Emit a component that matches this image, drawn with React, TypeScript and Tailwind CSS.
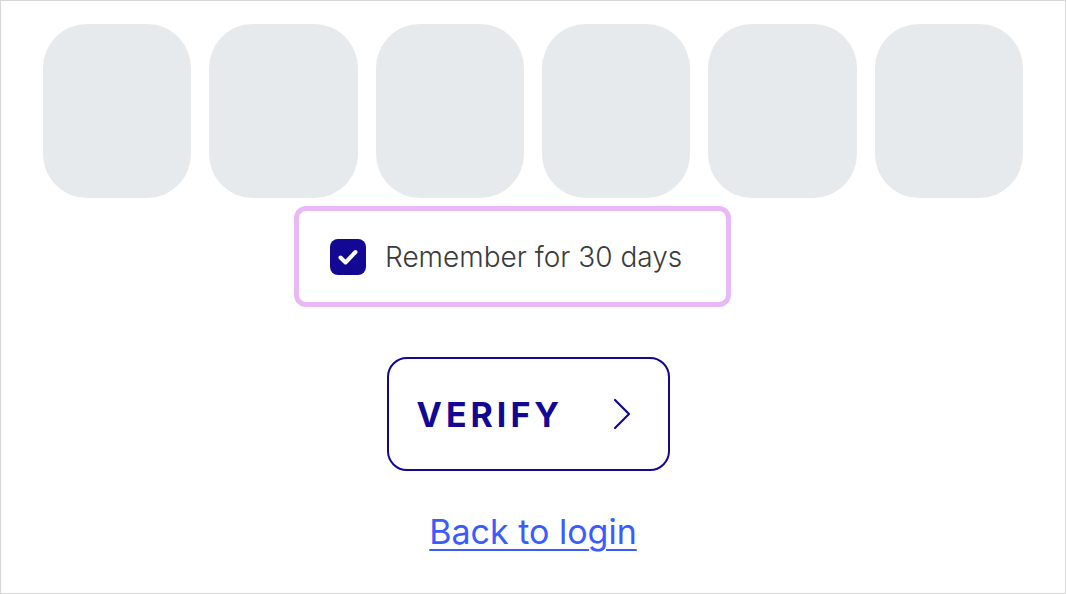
import { useState } from "react";

const slots = [0, 1, 2, 3, 4, 5];

export default function App() {
  const [remember, setRemember] = useState(true);

  return (
    <div className="flex h-[594px] w-[1066px] flex-col items-center border border-[#d6d6d6] bg-white font-['Inter',sans-serif]">
      <div className="mt-[23px] flex w-full gap-[18px] px-[42px]">
        {slots.map((i) => (
          <div key={i} className="h-[174px] flex-1 rounded-[44px] bg-[#e7eaed]" />
        ))}
      </div>

      <label className="mr-[41px] mt-[8px] flex h-[101px] w-[437px] cursor-pointer items-center gap-[19px] rounded-[12px] border-[5px] border-[#e9b9f7] pl-[31px]">
        <button
          type="button"
          onClick={() => setRemember(!remember)}
          className="flex h-[36px] w-[36px] shrink-0 items-center justify-center rounded-[8px] bg-[#130893]"
        >
          {remember && (
            <svg viewBox="0 0 24 24" className="h-[24px] w-[24px]" fill="none" stroke="white" strokeWidth="4" strokeLinecap="round" strokeLinejoin="round">
              <path d="M4.5 12.5l5 5 10-10.5" />
            </svg>
          )}
        </button>
        <span className="whitespace-nowrap text-[28px] font-light text-[#3b3b3b]">Remember for 30 days</span>
      </label>

      <button className="mr-[10px] mt-[50px] flex h-[114px] w-[283px] items-center justify-between rounded-[20px] border-2 border-[#130893] pl-[28px] pr-[36px] text-[#130893]">
        <span className="text-[34px] font-bold tracking-[4px]">VERIFY</span>
        <svg viewBox="0 0 20 32" className="h-[32px] w-[20px]" fill="none" stroke="currentColor" strokeWidth="2.2" strokeLinecap="round" strokeLinejoin="round">
          <path d="M3 2l14 14-14 14" />
        </svg>
      </button>

      <a href="#" className="mt-[35px] text-[34px] text-[#3a5bff] underline decoration-2 underline-offset-[5px]">
        Back to login
      </a>
    </div>
  );
}
